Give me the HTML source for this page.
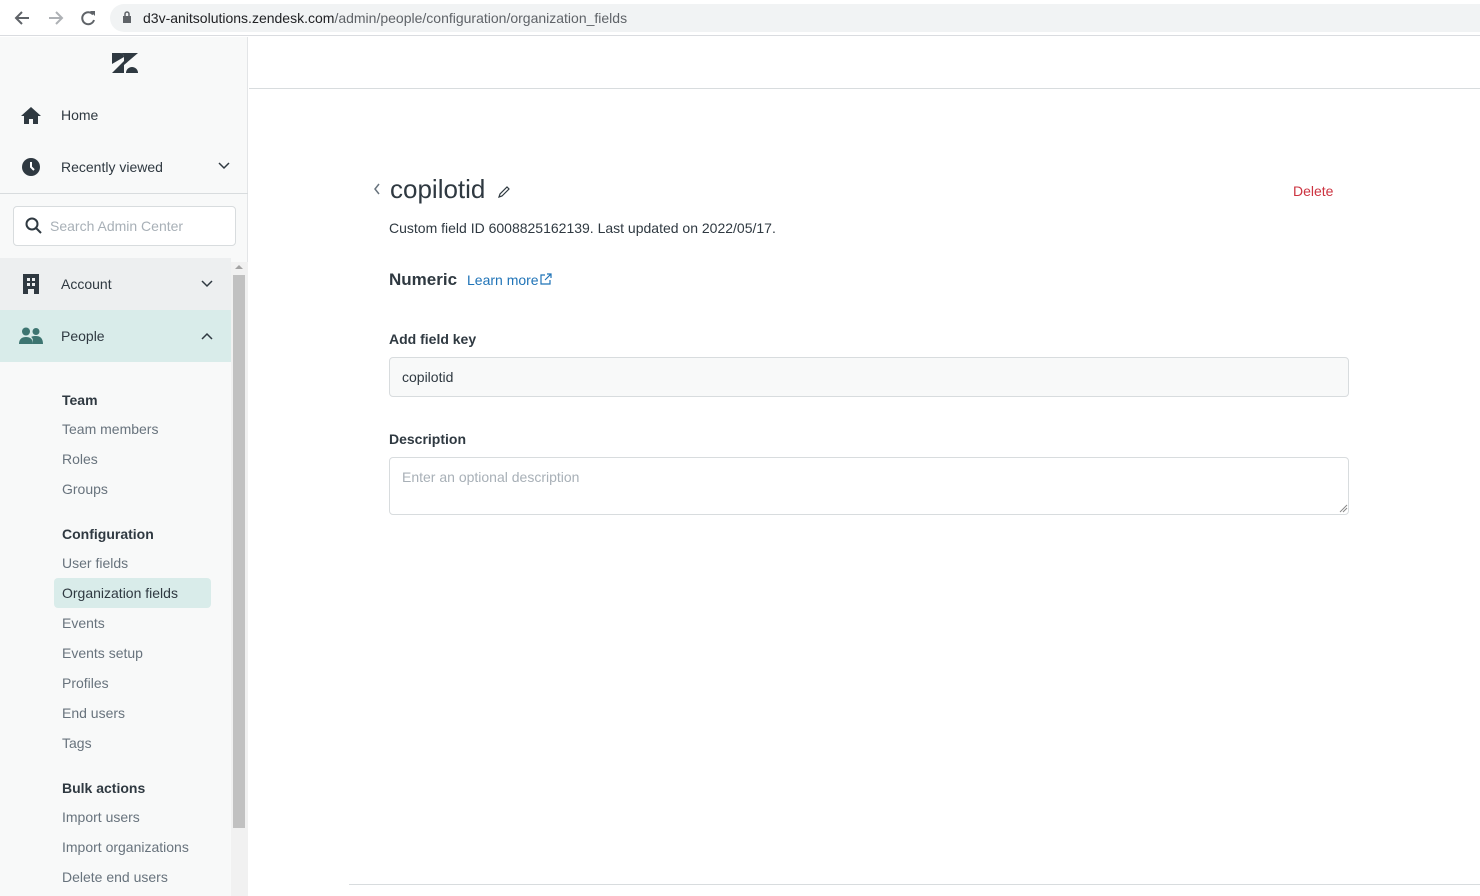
<!DOCTYPE html>
<html><head><meta charset="utf-8"><style>
*{box-sizing:border-box;margin:0;padding:0}
body{width:1480px;height:896px;overflow:hidden;background:#fff;font-family:"Liberation Sans",sans-serif;color:#2f3941;position:relative}
.a{position:absolute}
.topbar{left:0;top:0;width:1480px;height:36px;background:#fff;border-bottom:1px solid #dadce0}
.url{left:110px;top:4px;width:1400px;height:28px;background:#f1f3f4;border-radius:14px}
.urltext{left:143px;top:10px;font-size:14px;color:#5f6368}
.urltext b{font-weight:normal;color:#202124}
.side{left:0;top:37px;width:248px;height:859px;background:#f8f9f9;border-right:1px solid #e3e5e7}
.nav{font-size:14px;color:#2f3941}
.sub{font-size:14px;color:#68737d;left:62px}
.hd{font-size:14px;color:#2f3941;font-weight:bold;left:62px}
</style></head><body>
<div class="a topbar"></div>
<svg class="a" style="left:12px;top:8px" width="100" height="20" viewBox="0 0 100 20">
<path d="M17 10H5M10 4L4 10l6 6" stroke="#5f6368" stroke-width="2" fill="none"/>
<path d="M37 10h12M44 4l6 6-6 6" stroke="#aeb1b5" stroke-width="2" fill="none"/>
<path d="M81 6.5A6 6 0 1 0 82 12" stroke="#5f6368" stroke-width="2" fill="none"/><path d="M78 3h5v5z" fill="#5f6368"/>
</svg>
<div class="a url"></div>
<svg class="a" style="left:122px;top:11px" width="10" height="13"><rect x="1" y="5" width="8" height="7" fill="#5f6368"/><path d="M3 5V3a2 2 0 0 1 4 0v2" stroke="#5f6368" stroke-width="1.5" fill="none"/></svg>
<div class="a urltext"><b>d3v-anitsolutions.zendesk.com</b>/admin/people/configuration/organization_fields</div>

<div class="a side"></div>
<svg class="a" style="left:112px;top:53px" width="26" height="20" viewBox="0 0 26 20"><path d="M0 0H26L12 12V4a4 4 0 0 0-4-4z" fill="#2f3941"/><path d="M0 0h8a4 4 0 0 1 4 4v0L0 11z" fill="#2f3941"/><path d="M0 20L12 8v12z" fill="#2f3941"/><path d="M14 20a6 6 0 0 1 12 0z" fill="#2f3941"/></svg>
<svg class="a" style="left:20px;top:106px" width="22" height="18"><path d="M11 1L1 10h3v8h5v-5h4v5h5v-8h3z" fill="#2f3941"/></svg>
<div class="a nav" style="left:61px;top:107px">Home</div>
<svg class="a" style="left:22px;top:158px" width="18" height="18"><circle cx="9" cy="9" r="9" fill="#2f3941"/><path d="M9 4v5l3 3" stroke="#fff" stroke-width="2" fill="none"/></svg>
<div class="a nav" style="left:61px;top:159px">Recently viewed</div>
<svg class="a" style="left:218px;top:162px" width="12" height="8"><path d="M1 1l5 5 5-5" stroke="#2f3941" stroke-width="1.5" fill="none"/></svg>
<div class="a" style="left:0;top:193px;width:248px;height:1px;background:#d8dcde"></div>
<div class="a" style="left:13px;top:206px;width:223px;height:40px;background:#fff;border:1px solid #d8dcde;border-radius:4px"></div>
<svg class="a" style="left:25px;top:217px" width="18" height="18"><circle cx="7" cy="7" r="5.5" stroke="#2f3941" stroke-width="2" fill="none"/><path d="M11 11l5 5" stroke="#2f3941" stroke-width="2"/></svg>
<div class="a" style="left:50px;top:218px;font-size:14px;color:#a8b0b7">Search Admin Center</div>
<div class="a" style="left:0;top:258px;width:231px;height:52px;background:#edeff0"></div>
<svg class="a" style="left:22px;top:274px" width="18" height="20"><path d="M1 0h16v20h-5v-5H6v5H1z" fill="#2f3941"/><rect x="5" y="4" width="3" height="3" fill="#edeff0"/><rect x="10" y="4" width="3" height="3" fill="#edeff0"/><rect x="5" y="9" width="3" height="3" fill="#edeff0"/><rect x="10" y="9" width="3" height="3" fill="#edeff0"/></svg>
<div class="a nav" style="left:61px;top:276px">Account</div>
<svg class="a" style="left:201px;top:280px" width="12" height="8"><path d="M1 1l5 5 5-5" stroke="#2f3941" stroke-width="1.5" fill="none"/></svg>
<div class="a" style="left:0;top:310px;width:231px;height:52px;background:#d9ecea"></div>
<svg class="a" style="left:19px;top:327px" width="24" height="18"><circle cx="7" cy="4.5" r="4" fill="#3d7571"/><path d="M0 17c0-5 3-7 7-7s7 2 7 7z" fill="#3d7571"/><circle cx="17" cy="4.5" r="3.5" fill="#3d7571"/><path d="M14 17c0-4 0-6-2-7 2-1 3-1 5-1 4 0 7 2 7 8z" fill="#3d7571"/></svg>
<div class="a nav" style="left:61px;top:328px">People</div>
<svg class="a" style="left:201px;top:332px" width="12" height="8"><path d="M1 7l5-5 5 5" stroke="#2f3941" stroke-width="1.5" fill="none"/></svg>
<div class="a" style="left:231px;top:262px;width:17px;height:634px;background:#f1f1f1"></div>
<div class="a" style="left:233px;top:275px;width:12px;height:553px;background:#c1c1c1"></div>
<svg class="a" style="left:235px;top:264px" width="8" height="6"><path d="M0 5l4-4 4 4z" fill="#a3a3a3"/></svg>

<div class="a hd" style="top:392px">Team</div>
<div class="a sub" style="top:421px">Team members</div>
<div class="a sub" style="top:451px">Roles</div>
<div class="a sub" style="top:481px">Groups</div>
<div class="a hd" style="top:526px">Configuration</div>
<div class="a sub" style="top:555px">User fields</div>
<div class="a" style="left:54px;top:578px;width:157px;height:30px;background:#d9ecea;border-radius:4px"></div>
<div class="a sub" style="top:585px;color:#2f3941">Organization fields</div>
<div class="a sub" style="top:615px">Events</div>
<div class="a sub" style="top:645px">Events setup</div>
<div class="a sub" style="top:675px">Profiles</div>
<div class="a sub" style="top:705px">End users</div>
<div class="a sub" style="top:735px">Tags</div>
<div class="a hd" style="top:780px">Bulk actions</div>
<div class="a sub" style="top:809px">Import users</div>
<div class="a sub" style="top:839px">Import organizations</div>
<div class="a sub" style="top:869px">Delete end users</div>

<div class="a" style="left:249px;top:88px;width:1231px;height:1px;background:#d8dcde"></div>
<svg class="a" style="left:373px;top:183px" width="8" height="12"><path d="M6 1L2 6l4 5" stroke="#68737d" stroke-width="1.5" fill="none"/></svg>
<div class="a" style="left:390px;top:174px;font-size:26px;color:#2f3941">copilotid</div>
<svg class="a" style="left:497px;top:185px" width="14" height="14"><path d="M2 12l1-3 7-7 2 2-7 7z" stroke="#2f3941" stroke-width="1.2" fill="none"/></svg>
<div class="a" style="left:1293px;top:183px;font-size:14px;color:#cc3340">Delete</div>
<div class="a" style="left:389px;top:220px;font-size:14px;color:#2f3941">Custom field ID 6008825162139. Last updated on 2022/05/17.</div>
<div class="a" style="left:389px;top:270px;font-size:17px;color:#2f3941;font-weight:bold">Numeric</div>
<div class="a" style="left:467px;top:272px;font-size:14px;color:#1f73b7">Learn more</div>
<svg class="a" style="left:540px;top:273px" width="12" height="12"><path d="M5 2H1v9h9V7M7 1h4v4M11 1L5 7" stroke="#1f73b7" stroke-width="1.2" fill="none"/></svg>
<div class="a" style="left:389px;top:331px;font-size:14px;font-weight:bold;color:#2f3941">Add field key</div>
<div class="a" style="left:389px;top:357px;width:960px;height:40px;background:#f8f9f9;border:1px solid #d8dcde;border-radius:4px"></div>
<div class="a" style="left:402px;top:369px;font-size:14px;color:#2f3941">copilotid</div>
<div class="a" style="left:389px;top:431px;font-size:14px;font-weight:bold;color:#2f3941">Description</div>
<div class="a" style="left:389px;top:457px;width:960px;height:58px;background:#fff;border:1px solid #d8dcde;border-radius:4px"></div>
<div class="a" style="left:402px;top:469px;font-size:14px;color:#a8b0b7">Enter an optional description</div>
<svg class="a" style="left:1338px;top:503px" width="10" height="10"><path d="M9 2L2 9M9 5L5 9" stroke="#888" stroke-width="1"/></svg>
<div class="a" style="left:349px;top:884px;width:1131px;height:1px;background:#d8dcde"></div>
</body></html>
